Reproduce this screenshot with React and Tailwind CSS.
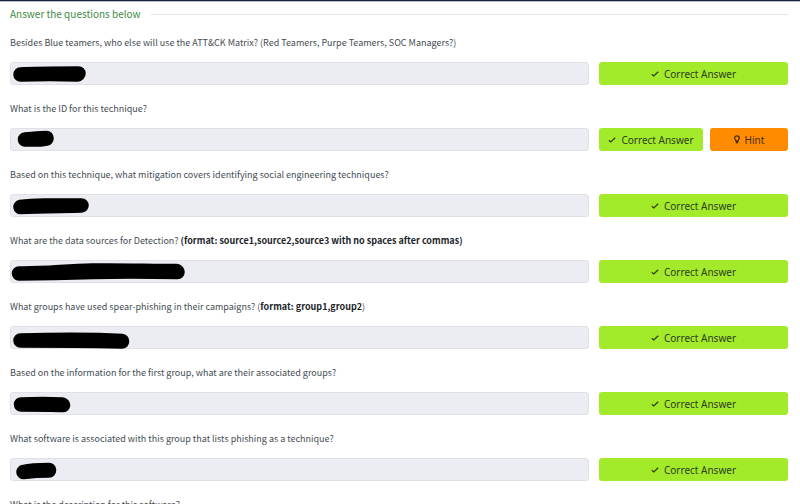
import React from "react";

const questions = [
  {
    text: "Besides Blue teamers, who else will use the ATT&CK Matrix? (Red Teamers, Purpe Teamers, SOC Managers?)",
    mark: "M10.5 13.5 C25 12.5 45 12.5 68.5 12.5 L67.5 13.5 C50 13 30 13 10.5 13.5",
  },
  {
    text: "What is the ID for this technique?",
    hint: true,
    mark: "M15 12.5 C22 12 30 11 36.5 11 L36.5 11.5 L30 12.5 L15 12.5",
  },
  {
    text: "Based on this technique, what mitigation covers identifying social engineering techniques?",
    mark: "M10.5 14 C20 12.5 26 12.5 34 12.5 L71.5 12.5 C55 13 30 13 10.5 14",
  },
  {
    text: "What are the data sources for Detection? ",
    strong: "(format: source1,source2,source3 with no spaces after commas)",
    mark: "M9 14.5 C35 15 55 12 82 11.5 C110 11 140 12 166.5 12 L167.5 13 C130 12 80 12.5 45 14 L9 14.5",
  },
  {
    text: "What groups have used spear-phishing in their campaigns? (",
    strong: "format: group1,group2",
    end: ")",
    mark: "M10.5 15.5 C50 14.5 85 14.5 112 16 L112 16.5 C90 16 50 15.5 10.5 15.5",
  },
  {
    text: "Based on the information for the first group, what are their associated groups?",
    mark: "M11 13.5 C25 13 40 13 52 13.5 L53 14 C40 13.5 25 13.5 11 13.5",
  },
  {
    text: "What software is associated with this group that lists phishing as a technique?",
    mark: "M13.5 15 C22 13 32 13 39 13 L39 13.5 C30 13.5 22 14 13.5 15",
  },
  { text: "What is the description for this software?" },
];

function CheckIcon() {
  return (
    <svg viewBox="0 0 8 8" className="h-2 w-2 shrink-0" fill="none" stroke="currentColor" strokeWidth="1.2" aria-hidden="true">
      <path d="M0.8 4.2 L2.8 6 L7.2 1.8" />
    </svg>
  );
}

function BulbIcon() {
  return (
    <svg viewBox="0 0 6 9" className="h-[9px] w-[6px] shrink-0" aria-hidden="true">
      <path
        d="M3 0.8 C1.5 0.8 0.7 1.7 0.7 2.9 C0.7 4.2 1.8 4.7 1.9 6 H4.1 C4.2 4.7 5.3 4.2 5.3 2.9 C5.3 1.7 4.5 0.8 3 0.8 Z"
        fill="none"
        stroke="currentColor"
        strokeWidth="1.2"
      />
      <path d="M1.8 5.6 H4.2 V7.6 L3.5 8.4 H2.5 L1.8 7.6 Z" fill="currentColor" />
    </svg>
  );
}

function Question({ item, id }) {
  return (
    <div className="flex flex-col gap-[11px]">
      <label htmlFor={id} className="text-[9px] leading-4 text-[#454c53]">
        {item.text}
        {item.strong && <strong className="font-bold text-[#212529]">{item.strong}</strong>}
        {item.end}
      </label>
      <div className="flex gap-[10px]">
        <div className="relative min-w-0 flex-1">
          <input
            id={id}
            type="text"
            readOnly
            className="block h-[23px] w-full rounded-[3px] border border-[#dfe1e6] bg-[#ecedf2] px-2 text-[9px] outline-none"
          />
          {item.mark && (
            <svg className="pointer-events-none absolute left-0 top-0 h-[25px] w-[200px]" viewBox="0 1 200 25" aria-hidden="true">
              <path d={item.mark} fill="#000" stroke="#000" strokeWidth="14.5" strokeLinecap="round" strokeLinejoin="round" />
            </svg>
          )}
        </div>
        <div className="flex w-[189px] shrink-0 gap-[7px] font-['Noto_Sans',sans-serif] text-[10px] leading-4 text-[#2e401c]">
          <button type="button" className="flex h-[23px] flex-auto items-center justify-center gap-[5px] whitespace-nowrap rounded-[3px] bg-[#a3ea2a]">
            <CheckIcon />
            Correct Answer
          </button>
          {item.hint && (
            <button type="button" className="flex h-[23px] w-[78px] shrink-0 items-center justify-center gap-[5px] rounded-[3px] bg-[#ff8c00] text-[#432c0e]">
              <BulbIcon />
              Hint
            </button>
          )}
        </div>
      </div>
    </div>
  );
}

export default function App() {
  return (
    <main className="h-screen overflow-hidden border-t border-[#1c2540] bg-white pl-[10px] pr-3 font-['Source_Sans_Pro','Noto_Sans_CJK_SC',sans-serif] shadow-[inset_0_1px_0_#b9bdc9]">
      <header className="flex items-center gap-[10px] pt-[5px]">
        <h1 className="text-[10px] leading-4 text-[#3f8a3f]">Answer the questions below</h1>
        <hr className="flex-1 border-t border-[#e6e7e9]" />
      </header>
      <form className="mt-[13px] flex flex-col gap-4" onSubmit={(event) => event.preventDefault()}>
        {questions.map((item, index) => (
          <Question key={item.text} item={item} id={`answer-${index + 1}`} />
        ))}
      </form>
    </main>
  );
}
